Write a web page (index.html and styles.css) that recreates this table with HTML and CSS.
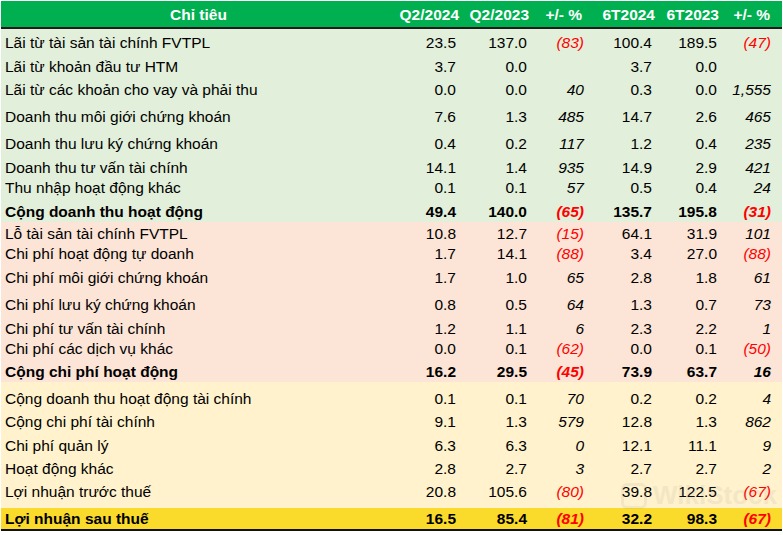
FILE: index.html
```html
<!DOCTYPE html>
<html lang="vi">
<head>
<meta charset="utf-8">
<link rel="stylesheet" href="styles.css">
</head>
<body>
<div class="sheet">
  <div class="row head">
    <span class="c1 hc">Chỉ tiêu</span><span>Q2/2024</span><span>Q2/2023</span><span>+/- %</span><span>6T2024</span><span>6T2023</span><span>+/- %</span>
  </div>
  <div class="row g h25"><span class="c1">Lãi từ tài sản tài chính FVTPL</span><span>23.5</span><span>137.0</span><span class="p neg">(83)</span><span>100.4</span><span>189.5</span><span class="p neg">(47)</span></div>
  <div class="row g h24"><span class="c1">Lãi từ khoản đầu tư HTM</span><span>3.7</span><span>0.0</span><span class="p"></span><span>3.7</span><span>0.0</span><span class="p"></span></div>
  <div class="row g h23"><span class="c1">Lãi từ các khoản cho vay và phải thu</span><span>0.0</span><span>0.0</span><span class="p">40</span><span>0.3</span><span>0.0</span><span class="p">1,555</span></div>
  <div class="row g h27"><span class="c1">Doanh thu môi giới chứng khoán</span><span>7.6</span><span>1.3</span><span class="p">485</span><span>14.7</span><span>2.6</span><span class="p">465</span></div>
  <div class="row g h27"><span class="c1">Doanh thu lưu ký chứng khoán</span><span>0.4</span><span>0.2</span><span class="p">117</span><span>1.2</span><span>0.4</span><span class="p">235</span></div>
  <div class="row g h24"><span class="c1">Doanh thu tư vấn tài chính</span><span>14.1</span><span>1.4</span><span class="p">935</span><span>14.9</span><span>2.9</span><span class="p">421</span></div>
  <div class="row g h20"><span class="c1">Thu nhập hoạt động khác</span><span>0.1</span><span>0.1</span><span class="p">57</span><span>0.5</span><span>0.4</span><span class="p">24</span></div>
  <div class="row g h23 total"><span class="c1">Cộng doanh thu hoạt động</span><span>49.4</span><span>140.0</span><span class="p neg">(65)</span><span>135.7</span><span>195.8</span><span class="p neg">(31)</span></div>

  <div class="row r h23"><span class="c1">Lỗ tài sản tài chính FVTPL</span><span>10.8</span><span>12.7</span><span class="p neg">(15)</span><span>64.1</span><span>31.9</span><span class="p">101</span></div>
  <div class="row r h20"><span class="c1">Chi phí hoạt động tự doanh</span><span>1.7</span><span>14.1</span><span class="p neg">(88)</span><span>3.4</span><span>27.0</span><span class="p neg">(88)</span></div>
  <div class="row r h24"><span class="c1">Chi phí môi giới chứng khoán</span><span>1.7</span><span>1.0</span><span class="p">65</span><span>2.8</span><span>1.8</span><span class="p">61</span></div>
  <div class="row r h27"><span class="c1">Chi phí lưu ký chứng khoán</span><span>0.8</span><span>0.5</span><span class="p">64</span><span>1.3</span><span>0.7</span><span class="p">73</span></div>
  <div class="row r h24"><span class="c1">Chi phí tư vấn tài chính</span><span>1.2</span><span>1.1</span><span class="p">6</span><span>2.3</span><span>2.2</span><span class="p">1</span></div>
  <div class="row r h19"><span class="c1">Chi phí các dịch vụ khác</span><span>0.0</span><span>0.1</span><span class="p neg">(62)</span><span>0.0</span><span>0.1</span><span class="p neg">(50)</span></div>
  <div class="row r h23 total"><span class="c1">Cộng chi phí hoạt động</span><span>16.2</span><span>29.5</span><span class="p neg">(45)</span><span>73.9</span><span>63.7</span><span class="p">16</span></div>

  <div class="row y h28"><span class="c1">Cộng doanh thu hoạt động tài chính</span><span>0.1</span><span>0.1</span><span class="p">70</span><span>0.2</span><span>0.2</span><span class="p">4</span></div>
  <div class="row y h23"><span class="c1">Cộng chi phí tài chính</span><span>9.1</span><span>1.3</span><span class="p">579</span><span>12.8</span><span>1.3</span><span class="p">862</span></div>
  <div class="row y h24"><span class="c1">Chi phí quản lý</span><span>6.3</span><span>6.3</span><span class="p">0</span><span>12.1</span><span>11.1</span><span class="p">9</span></div>
  <div class="row y h23"><span class="c1">Hoạt động khác</span><span>2.8</span><span>2.7</span><span class="p">3</span><span>2.7</span><span>2.7</span><span class="p">2</span></div>
  <div class="row y h28 tall"><span class="c1">Lợi nhuận trước thuế</span><span>20.8</span><span>105.6</span><span class="p neg">(80)</span><span>39.8</span><span>122.5</span><span class="p neg">(67)</span></div>
  <div class="row gold h21 total last"><span class="c1">Lợi nhuận sau thuế</span><span>16.5</span><span>85.4</span><span class="p neg">(81)</span><span>32.2</span><span>98.3</span><span class="p neg">(67)</span></div>

  <div class="watermark"><span class="wm-logo"></span><span class="wm-text">WikiStock</span></div>
</div>
</body>
</html>
```

FILE: styles.css
```css
html, body {
  margin: 0;
  padding: 0;
  background: #ffffff;
}
body {
  font-family: "Liberation Sans", Arial, sans-serif;
  font-size: 15.5px;
  color: #000;
}
.sheet {
  position: relative;
  width: 781px;
  margin-left: 1px;
  padding-top: 1px;
}
.row {
  display: grid;
  grid-template-columns: 395px 63px 71px 57px 68px 65px 62px;
  align-items: end;
  line-height: 18px;
  box-sizing: border-box;
  padding-bottom: 2px;
}
.row > span {
  text-align: right;
  padding-right: 3px;
  white-space: nowrap;
}
.row > span:last-child {
  padding-right: 11px;
}
.row > .c1 {
  text-align: left;
  padding-left: 4px;
  padding-right: 0;
}
.head {
  height: 28px;
  background: #00b050;
  color: #fff;
  font-weight: bold;
  border-bottom: 2px solid #1b1b1b;
  padding-bottom: 3px;
}
.head > span { padding-right: 0; }
.head > span:nth-child(3) { padding-right: 1px; }
.head > span:nth-child(4) { padding-right: 5px; }
.head > span:nth-child(6) { padding-right: 1px; }
.head > span:nth-child(7) { padding-right: 12px; }
.head > .hc {
  text-align: center;
  padding-left: 0;
}
.g { background: #e2efda; }
.r { background: #fce4d6; }
.y { background: #fff2cc; }
.gold { background: #fadb2c; }
.p { font-style: italic; }
.neg { color: #ff0000; }
.total { font-weight: bold; }
.total.r, .total.g { padding-bottom: 1px; }
.tall { padding-bottom: 7px; }
.last { border-bottom: 2px solid #111; padding-bottom: 1px; }
.h19 { height: 19px; }
.h20 { height: 20px; }
.h21 { height: 23px; }
.h23 { height: 23px; }
.h24 { height: 24px; }
.h25 { height: 25px; }
.h27 { height: 27px; }
.h28 { height: 28px; }
.watermark {
  position: absolute;
  left: 620px;
  top: 480px;
  display: flex;
  align-items: center;
  gap: 6px;
  opacity: 0.1;
  pointer-events: none;
}
.wm-logo {
  width: 26px;
  height: 26px;
  border: 3px solid #888;
  border-radius: 6px;
  box-sizing: border-box;
}
.wm-text {
  font-family: "Liberation Sans", Arial, sans-serif;
  font-weight: bold;
  font-size: 26px;
  color: #888;
}
```
